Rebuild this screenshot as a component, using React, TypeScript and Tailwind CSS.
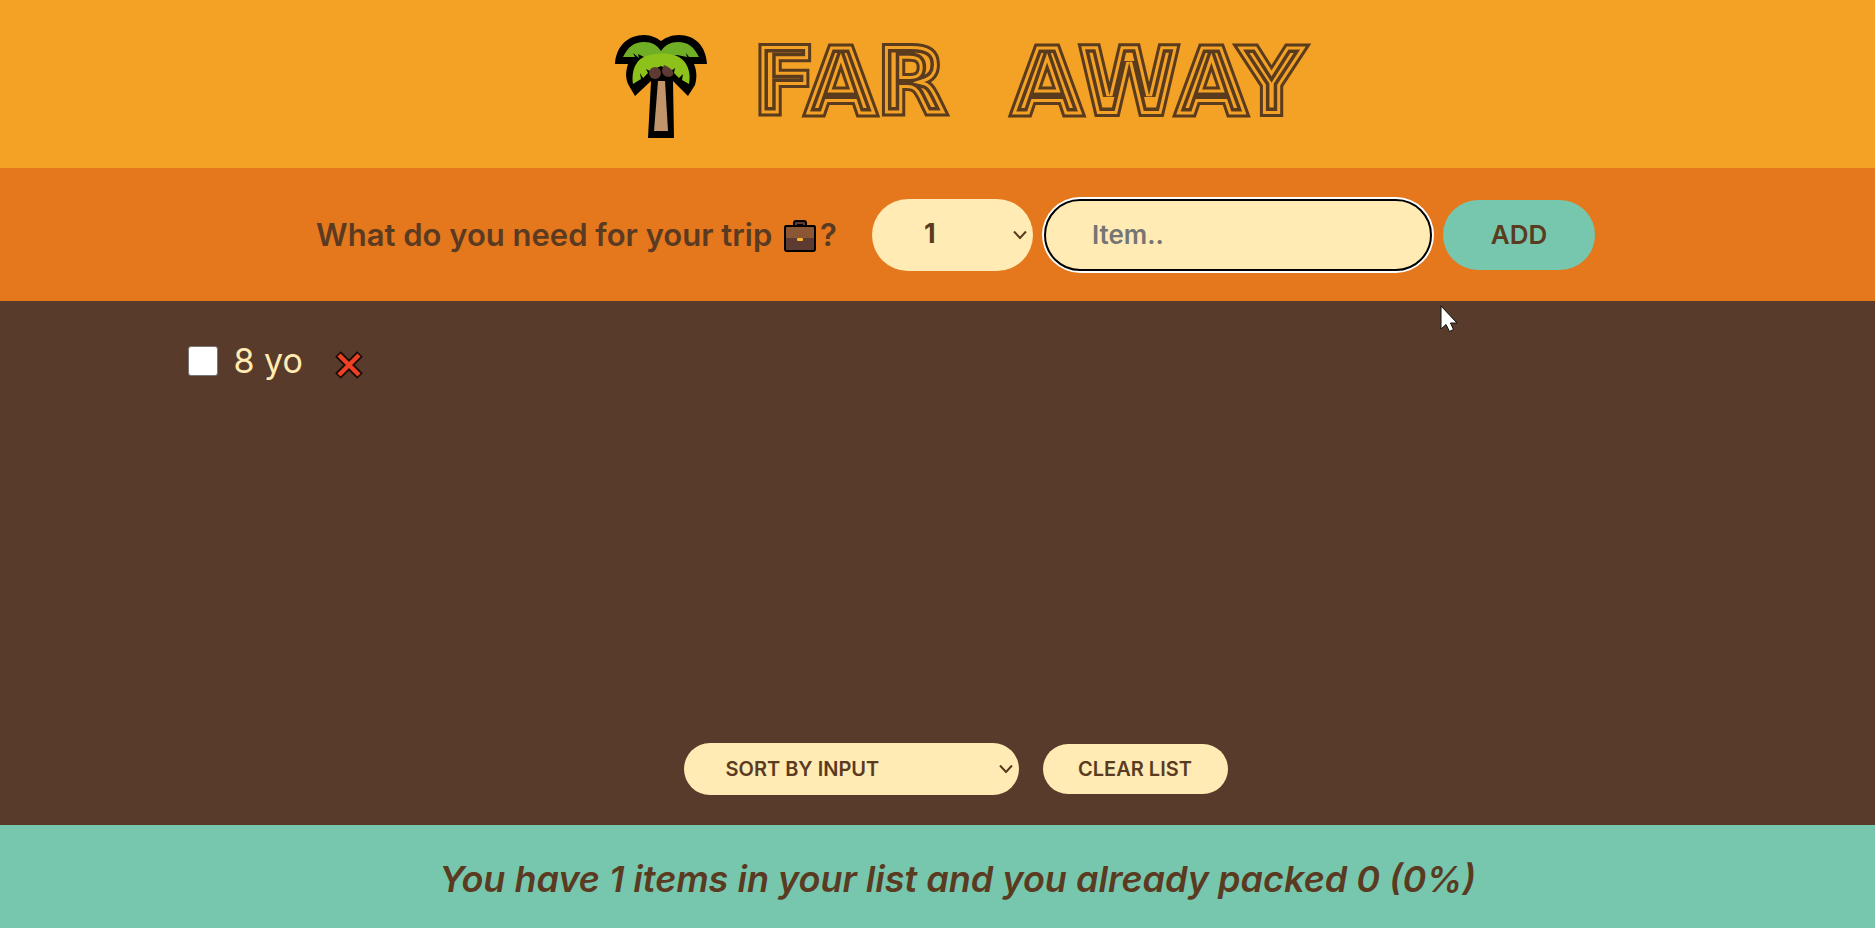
import React from "react";

function PalmTree() {
  return (
    <svg viewBox="0 0 92 103" className="h-[103px] w-[92px] shrink-0" aria-hidden="true">
      <path
        d="M0 29C1 11 13 0 29 0C36 0 42 3 46 6C50 3 56 0 64 0C80 0 91 11 92 29H79C82 36 82 43 80 50L73 61L58 46L59 103H33L36 46L20 61L13 49C10 41 11 36 13 29Z"
        fill="#000"
      />
      <path d="M43 46H50L53 96H39Z" fill="#c19469" />
      <path
        d="M8 22C13 12 19 7 29 7C37 7 42 10 46 16C50 10 56 7 63 7C73 7 79 12 84 22H74L71 18L72 22L62 20L46 24L29 22L23 19L24 23L18 18L20 22Z"
        fill="#6fae25"
      />
      <path
        d="M18 49C16 34 22 22 35 20C42 18 52 18 58 20C70 22 77 35 74 49L67 45L68 39L64 43L59 38L60 33L56 36L46 31L35 36L31 34L33 38L28 43L25 38L26 44Z"
        fill="#8cc21a"
      />
      <circle cx="40" cy="38" r="6" fill="#5d3b32" />
      <path d="M49 30C57 33 59 37 58 40C54 44 47 41 47 36C47 34 48 32 49 30Z" fill="#5d3b32" />
    </svg>
  );
}

function Title() {
  return (
    <h1 className="m-0">
      <svg viewBox="0 0 570 120" className="block h-[120px] w-[570px]" role="img" aria-label="Far Away">
        <defs>
          <clipPath id="letters">
            <use href="#title" />
          </clipPath>
        </defs>
        <g fill="#5a3b1d" stroke="#5a3b1d" strokeWidth="6">
          <text id="title" x="2" y="88" className="text-[92px] font-bold font-['DejaVu_Sans',sans-serif]">
            {"FAR\u00a0\u00a0AWAY"}
          </text>
        </g>
        <g clipPath="url(#letters)">
          <use href="#title" fill="#f4a226" stroke="#5a3b1d" strokeWidth="13" />
          <use href="#title" fill="none" stroke="#f4a226" strokeWidth="6" />
        </g>
      </svg>
    </h1>
  );
}

function Briefcase() {
  return (
    <svg viewBox="0 0 32 32" className="ml-1 mr-1 inline-block size-8 align-[-6px]" aria-hidden="true">
      <path d="M10 6V3Q10 1 12 1H20Q22 1 22 3V6" fill="#5d3b32" stroke="#000" strokeWidth="2" />
      <path d="M13 5H19" stroke="#000" strokeWidth="2" />
      <rect x="1" y="6" width="30" height="25" rx="2" fill="#5d3b32" stroke="#000" strokeWidth="2" />
      <path d="M1 8Q1 6 3 6H29Q31 6 31 8V16Q31 18 29 18H3Q1 18 1 16Z" fill="#8a5633" />
      <path d="M1 18V8Q1 6 3 6H29Q31 6 31 8V18" fill="none" stroke="#000" strokeWidth="2" />
      <rect x="13" y="18" width="6" height="3" rx="1" fill="#fbb72c" />
    </svg>
  );
}

function Cross() {
  return (
    <svg viewBox="0 0 28 28" className="size-7" aria-hidden="true">
      <path d="M3 3L25 25M25 3L3 25" stroke="#160a05" strokeWidth="8" />
      <path d="M4 4L24 24M24 4L4 24" stroke="#ee4023" strokeWidth="4.4" />
    </svg>
  );
}

function Chevron() {
  return (
    <svg viewBox="0 0 14 9" className="pointer-events-none absolute right-1.5 top-1/2 h-[9px] w-3.5 -translate-y-1/2" aria-hidden="true">
      <path d="M1 1L7 7.500L13 1" fill="none" stroke="#5a3b1d" strokeWidth="2" />
    </svg>
  );
}

function Pointer() {
  return (
    <svg viewBox="0 0 18 27" className="pointer-events-none absolute left-[1440px] top-1 h-[27px] w-[18px]" aria-hidden="true">
      <path d="M1 1V24L6 19.500L9.500 26.500L13.500 24.500L10.500 18H17Z" fill="#fff" stroke="#111" />
    </svg>
  );
}

const quantities = Array.from({ length: 20 }, (_, i) => i + 1);

export default function App() {
  return (
    <div className="flex min-h-screen flex-col bg-[#583b2a] font-[Inter,sans-serif] text-[#5a3b22]">
      <header className="flex h-[168px] items-center justify-center gap-11 bg-[#f4a226] pl-[60px] pt-1">
        <PalmTree />
        <Title />
      </header>

      <form className="flex h-[133px] items-center justify-center gap-[11px] bg-[#e5771d] pl-9" onSubmit={(e) => e.preventDefault()}>
        <h3 className="mr-6 whitespace-nowrap text-[31px] font-semibold leading-10">
          What do you need for your trip <Briefcase />?
        </h3>
        <div className="relative">
          <select aria-label="Quantity" className="block h-[72px] w-[161px] appearance-none rounded-full bg-[#ffebb3] px-[52px] text-[27px] font-bold">
            {quantities.map((n) => (
              <option key={n}>{n}</option>
            ))}
          </select>
          <Chevron />
        </div>
        <input
          type="text"
          aria-label="Item"
          placeholder="Item.."
          className="h-[72px] w-[388px] rounded-full border-2 border-black bg-[#ffebb3] px-[46px] text-[26px] font-semibold outline-none ring-2 ring-white placeholder:text-[#757575]"
        />
        <button className="h-[70px] w-[152px] rounded-full bg-[#76c7ad] text-[26px] font-semibold">ADD</button>
      </form>

      <main className="relative flex grow flex-col items-center justify-between pb-[30px] pt-9">
        <ul className="w-4/5">
          <li className="flex items-center text-[#ffebb3]">
            <input
              id="item-8-yo"
              type="checkbox"
              className="size-[30px] appearance-none rounded-[3px] border border-[#767676] bg-white"
            />
            <label htmlFor="item-8-yo" className="ml-4 text-[34px] leading-[48px]">
              8 yo
            </label>
            <button aria-label="Remove 8 yo" className="ml-8 pt-2">
              <Cross />
            </button>
          </li>
        </ul>
        <div className="flex items-center gap-6 pl-9">
          <div className="relative">
            <select aria-label="Sort order" className="block h-[52px] w-[335px] appearance-none rounded-full bg-[#ffebb3] px-[42px] text-xl font-semibold">
              <option>SORT BY INPUT</option>
              <option>SORT BY DESCRIPTION</option>
              <option>SORT BY PACKED STATUS</option>
            </select>
            <Chevron />
          </div>
          <button className="h-[50px] w-[185px] rounded-full bg-[#ffebb3] text-xl font-semibold">CLEAR LIST</button>
        </div>
        <Pointer />
      </main>

      <footer className="flex h-[103px] items-center justify-center bg-[#76c7ad] pl-10 pt-1">
        <em className="text-4xl font-semibold leading-[48px]">
          You have 1 items in your list and you already packed 0 (0%)
        </em>
      </footer>
    </div>
  );
}
